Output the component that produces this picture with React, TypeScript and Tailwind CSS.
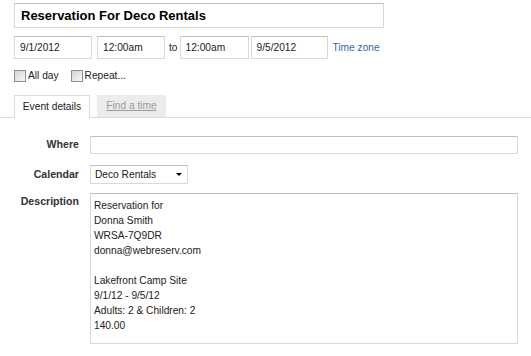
import { type ReactNode } from 'react';

const inputBox = 'border border-[#d9d9d9] border-t-[#c0c0c0] bg-white';

function DateField({ value, width }: { value: string; width: string }) {
  return (
    <div className={`${inputBox} ${width} h-[23px] flex items-center pl-[5px]`}>
      <span>{value}</span>
    </div>
  );
}

function Check({ label }: { label: string }) {
  return (
    <label className="flex items-center">
      <span className="w-[12px] h-[12px] border border-[#8e8e8e] bg-gradient-to-br from-[#d4d4d4] to-[#fafafa] mr-[2px]" />
      <span>{label}</span>
    </label>
  );
}

function Row({ label, children, top }: { label: string; children: ReactNode; top?: boolean }) {
  return (
    <div className={`flex ${top ? 'items-start' : 'items-center'}`}>
      <div className={`w-[79px] text-right font-bold text-[10.6px] text-[#333] ${top ? 'pt-[1px]' : ''}`}>{label}</div>
      <div className="ml-[11px]">{children}</div>
    </div>
  );
}

const description = [
  'Reservation for',
  'Donna Smith',
  'WRSA-7Q9DR',
  'donna@webreserv.com',
  '',
  'Lakefront Camp Site',
  '9/1/12 - 9/5/12',
  'Adults: 2 & Children: 2',
  '140.00',
];

export default function App() {
  return (
    <div className="w-[531px] h-[356px] bg-white text-[10.2px] text-[#222] font-['Liberation_Sans',Arial,sans-serif] overflow-hidden">
      <div className="pl-[14px] pt-[3px]">
        {/* Title */}
        <div className={`${inputBox} w-[370px] h-[25px] flex items-center pl-[6px]`}>
          <span className="font-bold text-[13px] text-black">Reservation For Deco Rentals</span>
        </div>

        {/* Dates */}
        <div className="flex items-center mt-[8px]">
          <DateField value="9/1/2012" width="w-[78px]" />
          <div className="w-[5px]" />
          <DateField value="12:00am" width="w-[68px]" />
          <span className="ml-[4px] mr-[2px]">to</span>
          <DateField value="12:00am" width="w-[69px]" />
          <div className="w-[2px]" />
          <DateField value="9/5/2012" width="w-[77px]" />
          <a className="ml-[5px] text-[#3a63b4]">Time zone</a>
        </div>

        {/* Checkboxes */}
        <div className="flex items-center gap-[12px] mt-[10px] h-[14px]">
          <Check label="All day" />
          <Check label="Repeat..." />
        </div>
      </div>

      {/* Tabs */}
      <div className="flex items-end mt-[12px] pl-[14px] border-b border-[#dcdcdc] h-[23px]">
        <div className="h-[23px] w-[76px] border border-b-0 border-[#dcdcdc] bg-white flex items-center justify-center -mb-px">
          Event details
        </div>
        <div className="ml-[7px] h-[22px] w-[69px] bg-[#ececec] flex items-center justify-center text-[#9a9a9a] underline">
          Find a time
        </div>
      </div>

      {/* Form */}
      <div className="flex flex-col mt-[18px]">
        <Row label="Where">
          <div className={`${inputBox} w-[428px] h-[18px]`} />
        </Row>
        <div className="h-[11px]" />
        <Row label="Calendar">
          <div className={`${inputBox} w-[98px] h-[19px] flex items-center justify-between pl-[4px] pr-[5px]`}>
            <span>Deco Rentals</span>
            <span className="w-0 h-0 border-l-[3px] border-r-[3px] border-t-[3px] border-l-transparent border-r-transparent border-t-black" />
          </div>
        </Row>
        <div className="h-[9px]" />
        <Row label="Description" top>
          <div className={`${inputBox} w-[428px] h-[151px] pl-[3px] pt-[4px] leading-[15px]`}>
            {description.map((line, i) => (
              <div key={i} className="h-[15px]">{line}</div>
            ))}
          </div>
        </Row>
      </div>
    </div>
  );
}
